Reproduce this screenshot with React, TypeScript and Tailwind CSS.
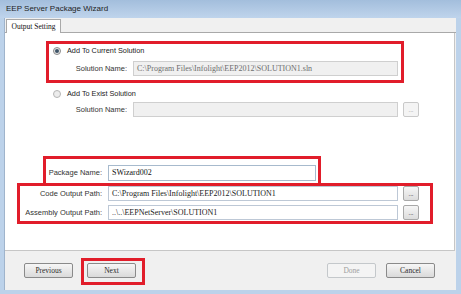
import React from "react";

const sans = "font-['Liberation_Sans',Arial,sans-serif]";
const serif = "font-['Liberation_Serif','Times_New_Roman',serif]";

function Field({ w, value, disabled }: { w: string; value?: string; disabled?: boolean }) {
  return (
    <div
      className={`${w} h-[15px] flex items-center px-[3px] border ${serif} text-[8px] whitespace-nowrap overflow-hidden ${
        disabled ? "bg-[#f0f0f0] border-[#cfcfcf] text-[#6d6d6d]" : "bg-white border-[#bdc8d6] text-[#222]"
      }`}
    >
      {value}
    </div>
  );
}

function Dots({ disabled }: { disabled?: boolean }) {
  return (
    <div
      className={`ml-[5px] w-[16px] h-[15px] rounded-[2px] border flex items-end justify-center pb-[3px] text-[6px] leading-none ${
        disabled ? "border-[#c9c9c9] bg-[#f4f4f4] text-[#aaa]" : "border-[#a8a8a8] bg-gradient-to-b from-[#f6f6f6] to-[#dcdcdc] text-[#444]"
      }`}
    >
      ...
    </div>
  );
}

function Label({ w, children }: { w: string; children: React.ReactNode }) {
  return (
    <div className={`${w} shrink-0 text-right pr-[6px] ${sans} text-[7.5px] text-[#333] whitespace-nowrap`}>{children}</div>
  );
}

function Btn({ children, disabled }: { children: React.ReactNode; disabled?: boolean }) {
  return (
    <div
      className={`w-[49px] h-[15px] rounded-[2px] border flex items-center justify-center ${serif} text-[7.5px] font-normal ${
        disabled
          ? "border-[#c4c8cb] bg-[#f4f4f4] text-[#a0a0a0]"
          : "border-[#8a8a8a] bg-gradient-to-b from-[#f6f6f6] to-[#dadada] text-[#2a2a2a]"
      }`}
    >
      {children}
    </div>
  );
}

export default function App() {
  return (
    <div className="w-[461px] h-[294px] flex flex-col bg-[#bcd2ea] overflow-hidden">
      {/* title bar */}
      <div className="h-[18px] shrink-0 flex items-center pl-[6px] bg-gradient-to-b from-[#a3bedc] to-[#bfd4ec]">
        <span className={`${sans} text-[8px] text-[#1e1e1e]`}>EEP Server Package Wizard</span>
      </div>

      <div className="flex-1 ml-[4px] mr-[5px] mb-[4px] flex flex-col bg-[#f0f0f0] border-l border-[#9fb4cc]">
        {/* tab strip */}
        <div className="h-[15px] shrink-0 flex items-end border-b border-[#a9a9a9]">
          <div className={`ml-[1px] w-[55px] h-[14px] -mb-[1px] bg-white border border-b-0 border-[#a9a9a9] flex items-center justify-center ${serif} text-[7.5px] text-[#111]`}>
            Output Setting
          </div>
        </div>

        {/* panel */}
        <div className="relative flex-1 mr-[1px] bg-white border-r border-b border-[#c6c6c6] flex flex-col">
          <div className="mt-[12px] h-[12px] flex items-center pl-[48px]">
            <div className="w-[8px] h-[8px] rounded-full border border-[#8c8c8c] bg-[#e6e6e6] flex items-center justify-center">
              <div className="w-[4px] h-[4px] rounded-full bg-[#3e5468]" />
            </div>
            <span className={`ml-[6px] ${sans} text-[7.3px] text-[#222]`}>Add To Current Solution</span>
          </div>
          <div className="mt-[4px] flex items-center">
            <Label w="w-[128px]">Solution Name:</Label>
            <Field w="w-[265px]" value="C:\Program Files\Infolight\EEP2012\SOLUTION1.sln" disabled />
          </div>

          <div className="mt-[12px] h-[12px] flex items-center pl-[48px]">
            <div className="w-[8px] h-[8px] rounded-full border border-[#b5b5b5] bg-[#ececec]" />
            <span className={`ml-[6px] ${sans} text-[7.3px] text-[#222]`}>Add To Exist Solution</span>
          </div>
          <div className="mt-[2px] flex items-center">
            <Label w="w-[128px]">Solution Name:</Label>
            <Field w="w-[265px]" disabled />
            <Dots disabled />
          </div>

          <div className="mt-[48px] flex items-center">
            <Label w="w-[103px]">Package Name:</Label>
            <div className={`w-[208px] h-[16px] flex items-center px-[3px] border border-[#a7bacd] bg-white ${serif} text-[8px] text-[#111]`}>
              SWizard002
            </div>
          </div>
          <div className="mt-[5px] flex items-center">
            <Label w="w-[103px]">Code Output Path:</Label>
            <Field w="w-[290px]" value="C:\Program Files\Infolight\EEP2012\SOLUTION1" />
            <Dots />
          </div>
          <div className="mt-[4px] flex items-center">
            <Label w="w-[103px]">Assembly Output Path:</Label>
            <Field w="w-[290px]" value="..\..\EEPNetServer\SOLUTION1" />
            <Dots />
          </div>

          {/* annotation boxes */}
          <div className="absolute left-[41px] top-[8px] w-[358px] h-[42px] border-[3px] border-[#e11d2a]" />
          <div className="absolute left-[38px] top-[123px] w-[278px] h-[30px] border-[3px] border-[#e11d2a]" />
          <div className="absolute left-[12px] top-[150px] w-[416px] h-[41px] border-[3px] border-[#e11d2a]" />
        </div>

        {/* bottom bar */}
        <div className="relative h-[39px] shrink-0 flex items-start pt-[12px] pl-[19px] pr-[21px]">
          <Btn>Previous</Btn>
          <div className="ml-[14px]">
            <Btn>Next</Btn>
          </div>
          <div className="flex-1" />
          <Btn disabled>Done</Btn>
          <div className="ml-[10px]">
            <Btn>Cancel</Btn>
          </div>
          <div className="absolute left-[76px] top-[7px] w-[64px] h-[27px] border-[3px] border-[#e11d2a]" />
        </div>
      </div>
    </div>
  );
}
